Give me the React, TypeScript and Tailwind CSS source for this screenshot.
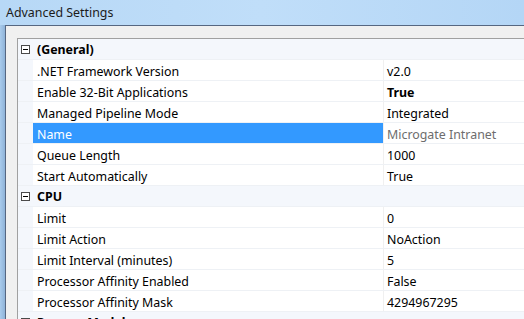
import { Fragment } from "react";

type Row =
  | { kind: "category"; title: string }
  | { kind: "prop"; name: string; value: string; bold?: boolean; selected?: boolean };

const rows: Row[] = [
  { kind: "category", title: "(General)" },
  { kind: "prop", name: ".NET Framework Version", value: "v2.0" },
  { kind: "prop", name: "Enable 32-Bit Applications", value: "True", bold: true },
  { kind: "prop", name: "Managed Pipeline Mode", value: "Integrated" },
  { kind: "prop", name: "Name", value: "Microgate Intranet", selected: true },
  { kind: "prop", name: "Queue Length", value: "1000" },
  { kind: "prop", name: "Start Automatically", value: "True" },
  { kind: "category", title: "CPU" },
  { kind: "prop", name: "Limit", value: "0" },
  { kind: "prop", name: "Limit Action", value: "NoAction" },
  { kind: "prop", name: "Limit Interval (minutes)", value: "5" },
  { kind: "prop", name: "Processor Affinity Enabled", value: "False" },
  { kind: "prop", name: "Processor Affinity Mask", value: "4294967295" },
  { kind: "category", title: "Process Model" },
];

function MinusBox() {
  return (
    <div className="w-[9px] h-[9px] border border-[#4a4a4a] bg-white flex items-center justify-center">
      <div className="w-[5px] h-px bg-black" />
    </div>
  );
}

export default function App() {
  return (
    <div
      className="w-[524px] h-[319px] overflow-hidden flex flex-col bg-gradient-to-b from-[#b9dbf9] to-[#9cc0e4] text-[12.4px] text-black"
      style={{ fontFamily: '"Noto Sans", "Open Sans", sans-serif' }}
    >
      {/* Title bar */}
      <div className="h-[25px] shrink-0 pl-[6px] pt-[2px] flex items-center text-[#1b1b1b] bg-gradient-to-r from-[#b7d8f6] via-[#c0def9] to-[#b4d6f6]">
        Advanced Settings
      </div>

      <div className="flex flex-1 min-h-0">
        {/* Left frame */}
        <div className="w-[5px] shrink-0 bg-gradient-to-r from-[#a9cbec] to-[#8fb3d8]" />

        <div className="flex-1 min-w-0 border-l border-t border-[#566781] bg-[#f0f0f0] pt-[12px] pl-[11px] flex flex-col">
          <div className="flex-1 border-l border-t border-[#a0a0a0] bg-[#f4f7fc]">
            {rows.map((row, i) => (
              <Fragment key={i}>
                {row.kind === "category" ? (
                  <div className="h-[21px] flex items-center border-b border-[#eef1f5]">
                    <div className="w-[19px] pl-[3px] shrink-0 flex items-center">
                      <MinusBox />
                    </div>
                    <span className="font-bold pt-[3px]">{row.title}</span>
                  </div>
                ) : (
                  <div className="h-[21px] flex border-b border-[#eef1f5]">
                    <div className="w-[15px] shrink-0" />
                    <div
                      className={`w-[351px] shrink-0 pl-[4px] pt-[4px] flex items-center border-r border-[#f0f0f0] ${
                        row.selected ? "bg-[#3399ff] text-white" : "bg-white"
                      }`}
                    >
                      {row.name}
                    </div>
                    <div
                      className={`flex-1 pl-[3px] pt-[4px] flex items-center bg-white ${
                        row.bold ? "font-bold" : ""
                      } ${row.selected ? "text-[#6d6d6d]" : ""}`}
                    >
                      {row.value}
                    </div>
                  </div>
                )}
              </Fragment>
            ))}
          </div>
        </div>
      </div>
    </div>
  );
}
